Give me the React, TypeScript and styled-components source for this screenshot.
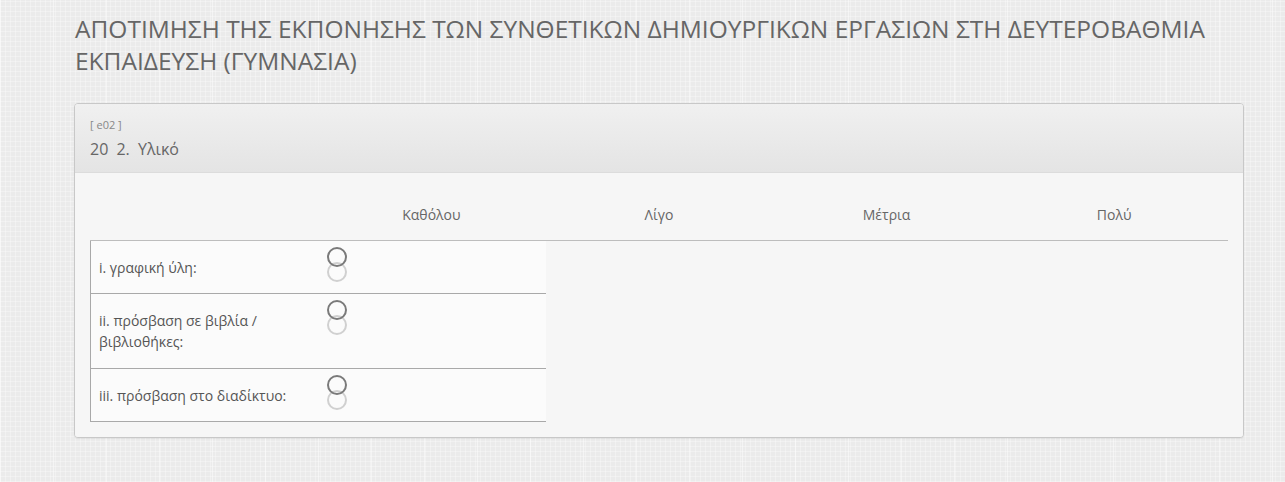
// Survey matrix question page
import styled, { createGlobalStyle } from 'styled-components'

const GlobalStyle = createGlobalStyle`
  html, body {
    margin: 0;
    padding: 0;
  }
  body {
    font-family: 'Open Sans', 'Noto Sans', sans-serif;
    color: #555;
    background-color: #ebebeb;
    background-image:
      repeating-linear-gradient(90deg, rgba(255,255,255,0.3) 0 1px, transparent 1px 5px),
      repeating-linear-gradient(0deg, rgba(255,255,255,0.3) 0 1px, transparent 1px 5px),
      repeating-linear-gradient(90deg, rgba(255,255,255,0.45) 0 1px, transparent 1px 53px);
    min-height: 482px;
  }
`

const Page = styled.div`
  width: 1170px;
  padding: 13px 0 0 74px;
`

const Title = styled.h1`
  margin: 0 0 26px 1px;
  font-size: 24.5px;
  line-height: 32px;
  font-weight: 400;
  color: #666;
`

const Panel = styled.section`
  border: 1px solid #c8c8c8;
  border-radius: 4px;
  background: #f5f5f5;
  box-shadow: 0 1px 1px rgba(0, 0, 0, 0.05);
  overflow: hidden;
`

const PanelHeading = styled.header`
  height: 69px;
  box-sizing: border-box;
  padding: 13px 15px 0;
  background: linear-gradient(#f0f0f0, #e4e4e4);
  border-bottom: 1px solid #dcdcdc;
`

const Code = styled.div`
  font-size: 11px;
  line-height: 16px;
  color: #888;
`

const Question = styled.div`
  margin-top: 5px;
  font-size: 16px;
  line-height: 22px;
  color: #666;
  word-spacing: 4px;
`

const PanelBody = styled.div`
  padding: 15px;
  background: #f6f6f6;
`

const HeaderRow = styled.div`
  display: grid;
  grid-template-columns: repeat(5, 1fr);
  height: 52px;
  align-items: center;
  border-bottom: 1px solid #bdbdbd;
`

const ColLabel = styled.div`
  text-align: center;
  font-size: 14px;
  color: #666;
  padding-top: 1px;
`

const Row = styled.div<{ $h: number }>`
  display: grid;
  grid-template-columns: 228px 228px;
  width: 456px;
  height: ${(p) => p.$h}px;
  box-sizing: border-box;
  background: #fbfbfb;
  border-left: 1px solid #a9a9a9;
  border-bottom: 1px solid #a9a9a9;
`

const RowLabel = styled.div`
  display: flex;
  align-items: center;
  padding: 0 8px;
  font-size: 14px;
  line-height: 21px;
  color: #555;
`

const RadioCell = styled.div`
  padding: 6px 0 0 8px;
`

const Ring = styled.span<{ $light?: boolean }>`
  display: block;
  width: 16px;
  height: 16px;
  border-radius: 50%;
  border: 2px solid ${(p) => (p.$light ? '#d0d0d0' : '#7a7a7a')};
  ${(p) => (p.$light ? 'margin-top: -5px;' : 'position: relative; z-index: 1;')}
`

const columns = ['Καθόλου', 'Λίγο', 'Μέτρια', 'Πολύ']

const items = [
  { label: 'i. γραφική ύλη:', h: 53 },
  { label: 'ii. πρόσβαση σε βιβλία / βιβλιοθήκες:', h: 75 },
  { label: 'iii. πρόσβαση στο διαδίκτυο:', h: 53 },
]

export default function App() {
  return (
    <>
      <GlobalStyle />
      <Page>
        <Title>
          ΑΠΟΤΙΜΗΣΗ ΤΗΣ ΕΚΠΟΝΗΣΗΣ ΤΩΝ ΣΥΝΘΕΤΙΚΩΝ ΔΗΜΙΟΥΡΓΙΚΩΝ ΕΡΓΑΣΙΩΝ ΣΤΗ
          ΔΕΥΤΕΡΟΒΑΘΜΙΑ ΕΚΠΑΙΔΕΥΣΗ (ΓΥΜΝΑΣΙΑ)
        </Title>
        <Panel>
          <PanelHeading>
            <Code>[ e02 ]</Code>
            <Question>20 2. Υλικό</Question>
          </PanelHeading>
          <PanelBody>
            <HeaderRow>
              <div />
              {columns.map((c) => (
                <ColLabel key={c}>{c}</ColLabel>
              ))}
            </HeaderRow>
            {items.map((it) => (
              <Row key={it.label} $h={it.h}>
                <RowLabel>{it.label}</RowLabel>
                <RadioCell>
                  <Ring />
                  <Ring $light />
                </RadioCell>
              </Row>
            ))}
          </PanelBody>
        </Panel>
      </Page>
    </>
  )
}
